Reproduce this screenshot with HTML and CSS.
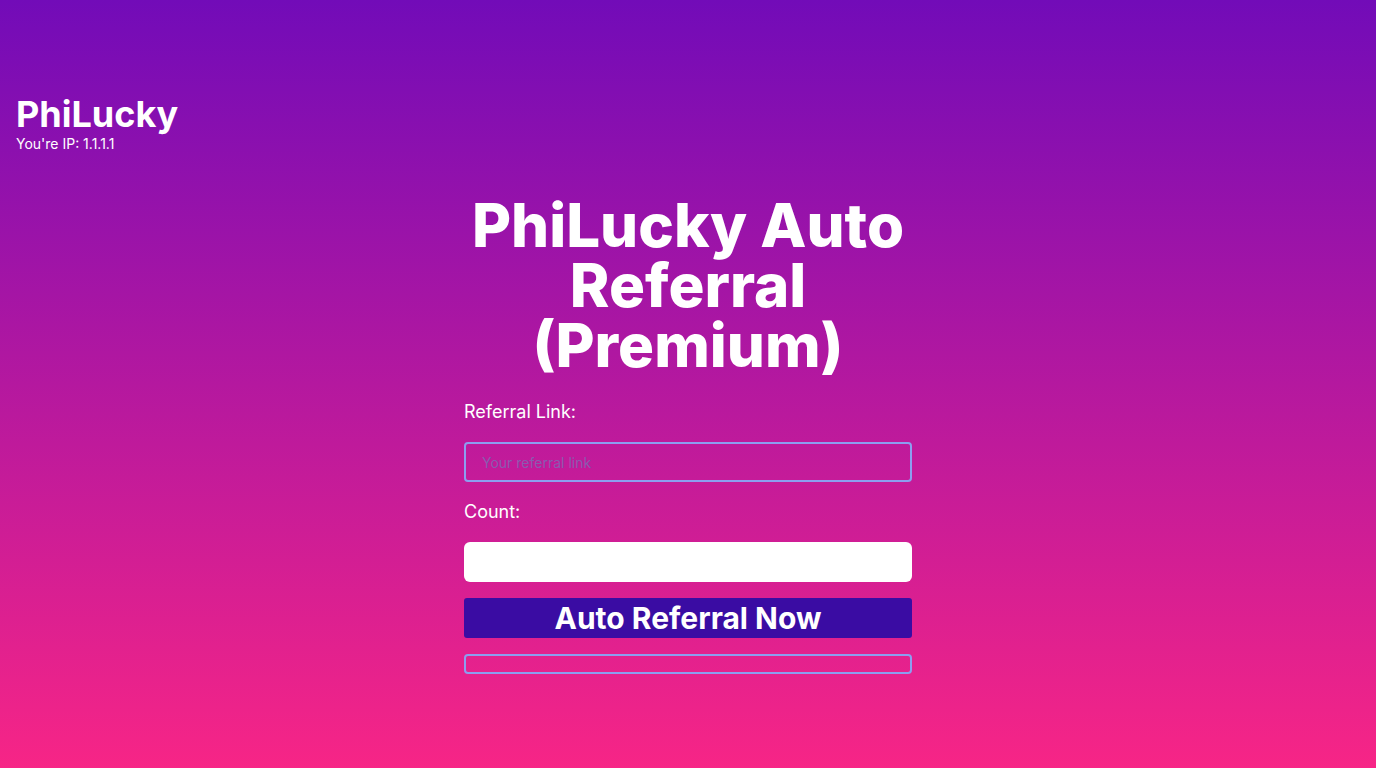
FILE: index.html
```html
<!DOCTYPE html>
<html lang="en">
<head>
<meta charset="utf-8">
<title>PhiLucky Auto Referral</title>
<link rel="stylesheet" href="styles.css">
</head>
<body>
<header class="brand">
  <h1 class="brand-name">PhiLucky</h1>
  <p class="brand-ip">You're IP: 1.1.1.1</p>
</header>
<main class="panel">
  <h2 class="title">PhiLucky Auto Referral (Premium)</h2>
  <form class="form">
    <label class="label" for="ref">Referral Link:</label>
    <input class="field field-outline" id="ref" type="text" placeholder="Your referral link">
    <label class="label" for="count">Count:</label>
    <input class="field field-white" id="count" type="text">
    <button class="submit" type="button">Auto Referral Now</button>
    <div class="result"></div>
  </form>
</main>
</body>
</html>
```

FILE: styles.css
```css
html, body {
  margin: 0;
  padding: 0;
  height: 100%;
}
body {
  background: linear-gradient(180deg, #720bb8 0%, #f72586 100%);
  font-family: Inter, "Noto Sans", sans-serif;
  color: #ffffff;
  min-height: 768px;
  box-sizing: border-box;
  padding-top: 94px;
}
.brand {
  padding-left: 16px;
}
.brand-name {
  margin: 0;
  font-size: 36px;
  line-height: 40px;
  font-weight: 700;
}
.brand-ip {
  margin: 0;
  font-size: 14px;
  line-height: 20px;
}
.panel {
  width: 448px;
  margin: 41px auto 0;
}
.title {
  margin: 0;
  text-align: center;
  font-size: 60px;
  line-height: 60px;
  font-weight: 800;
}
.form {
  display: flex;
  flex-direction: column;
  margin-top: 25px;
}
.label {
  font-size: 18px;
  line-height: 24px;
  margin-bottom: 18px;
}
.field {
  box-sizing: border-box;
  width: 448px;
  height: 40px;
  border-radius: 4px;
  font-family: Inter, "Noto Sans", sans-serif;
  font-size: 14px;
  padding: 0 16px;
  margin-bottom: 18px;
  outline: none;
}
.field-outline {
  background: transparent;
  border: 2px solid #8c9ef0;
  color: #ffffff;
}
.field-outline::placeholder {
  color: #8a5ab0;
}
.field-white {
  background: #ffffff;
  border: none;
  border-radius: 6px;
  margin-bottom: 16px;
}
.submit {
  height: 40px;
  border: none;
  border-radius: 3px;
  background: #3a0ca3;
  color: #ffffff;
  font-family: Inter, "Noto Sans", sans-serif;
  font-size: 30px;
  font-weight: 700;
  padding: 0;
  margin-bottom: 16px;
}
.result {
  box-sizing: border-box;
  height: 20px;
  border: 2px solid #8c9ef0;
  border-radius: 4px;
}
```
